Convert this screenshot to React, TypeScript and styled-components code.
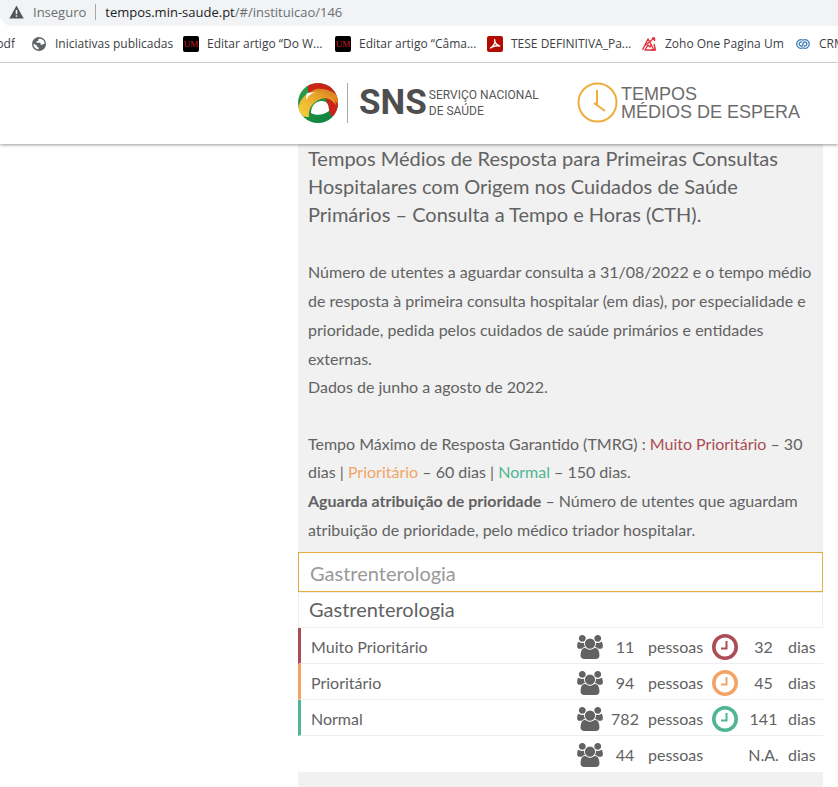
import React from "react";
import styled, { createGlobalStyle } from "styled-components";

const GlobalStyle = createGlobalStyle`
  * { box-sizing: border-box; }
  body { margin: 0; background: #fff; color: #626262; font-family: Lato, sans-serif; }
  a { color: inherit; text-decoration: none; }
  svg { flex: none; }
`;

const colors = { red: "#ac4d55", orange: "#f2a468", green: "#4fb594", text: "#626262" };

const Page = styled.div`
  display: flex;
  flex-direction: column;
  min-height: 100vh;
  overflow: hidden;
`;

const AddressBar = styled.div`
  display: flex;
  align-items: center;
  height: 26px;
  padding: 0 0 2px 9px;
  background: #f1f3f4;
  border-bottom-left-radius: 12px;
  font: 13px/20px "Open Sans", sans-serif;
  color: #6b6f73;
`;

const Security = styled.button`
  display: flex;
  align-items: center;
  gap: 9px;
  padding: 0 9px 0 0;
  border: 0;
  border-right: 1px solid #a5a8ab;
  height: 16px;
  background: none;
  font: 13px/16px "Open Sans", sans-serif;
  color: inherit;
`;

const Url = styled.div`
  margin-left: 9px;
  b { font-weight: 400; color: #202124; }
`;

const Bookmarks = styled.nav`
  display: grid;
  grid-template-columns: 31px 152px 152px 152px 154px 154px 60px;
  align-items: center;
  height: 37px;
  border-bottom: 1px solid #d9dadb;
  overflow: hidden;
  font: 12px/16px "Open Sans", sans-serif;
  color: #3c4043;
`;

const Bookmark = styled.a`
  display: flex;
  align-items: center;
  gap: 8px;
  white-space: nowrap;
`;

const ClippedBookmark = styled(Bookmark)`
  width: 15px;
  justify-content: flex-end;
  overflow: hidden;
`;

const Header = styled.header`
  position: relative;
  display: flex;
  align-items: center;
  height: 81px;
  padding: 0 15px 2px 298px;
  background: #fff;
  box-shadow: 0 1px 3px rgba(0, 0, 0, 0.4);
`;

const Brand = styled.a`
  display: flex;
  align-items: center;
  width: 279px;
`;

const Divider = styled.span`
  width: 1px;
  height: 40px;
  margin: 0 11px 0 9px;
  background: #aaa;
`;

const Acronym = styled.span`
  font: bold 35px/40px Roboto, sans-serif;
  color: #4e4e4e;
`;

const BrandName = styled.span`
  margin-left: 2px;
  font: 12px/16px Roboto, sans-serif;
  color: #575757;
  white-space: nowrap;
`;

const SiteName = styled.a`
  display: flex;
  align-items: center;
  gap: 3px;
  font: 18px/18px "Liberation Sans", sans-serif;
  color: #6c6c6c;
  white-space: nowrap;
`;

const Main = styled.main`
  display: flex;
  flex: 1;
  flex-direction: column;
  margin: 0 15px 0 298px;
  background: #f1f1f1;
`;

const Intro = styled.section`
  padding: 0 0 8px 10px;
  white-space: nowrap;
`;

const Title = styled.h1`
  margin: 0 0 29px;
  font-size: 20px;
  line-height: 28px;
  font-weight: 400;
`;

const Text = styled.p<{ $line?: number; $gap?: number }>`
  margin: 0 0 ${(p) => p.$gap ?? 0}px;
  font-size: 16px;
  line-height: ${(p) => p.$line ?? 28}px;
`;

const Tone = styled.span<{ $color: string }>`
  color: ${(p) => p.$color};
`;

const Search = styled.input`
  width: 100%;
  height: 40px;
  padding: 2px 11px 0;
  border: 1px solid #e5ac42;
  border-radius: 0;
  outline: 0;
  background: #fff;
  font: 20px/28px Lato, sans-serif;
  color: #626262;
  &::placeholder { color: #999; opacity: 1; }
`;

const Specialty = styled.h2`
  height: 36px;
  margin: 0;
  padding: 0 10px;
  border: 1px solid #eee;
  background: #fff;
  font-size: 20px;
  line-height: 32px;
  font-weight: 400;
`;

const Waiting = styled.table`
  width: 100%;
  table-layout: fixed;
  border-collapse: separate;
  border-spacing: 0;
  background: #fff;
  font-size: 16px;
  line-height: 20px;
`;

const Row = styled.tr<{ $color: string }>`
  height: 36px;
  td, th { padding: 3px 0 0; border-bottom: 1px solid #eee; }
  th {
    padding-left: 10px;
    border-left: 3px solid ${(p) => p.$color};
    text-align: left;
    font-weight: 400;
  }
  &:last-child td, &:last-child th { border-bottom-color: #fff; }
`;

const IconCell = styled.td`
  text-align: center;
  svg { display: block; margin: 0 auto 1px; }
`;

const Amount = styled.td`
  text-align: center;
  white-space: nowrap;
`;

const Unit = styled.td`
  && { padding-left: 5px; }
`;

const Globe = () => (
  <svg width="16" height="16" viewBox="0 0 16 16">
    <circle cx="8" cy="8" r="7" fill="#5f6368" />
    <path d="M8.800 2.400 7.300 3.600v1.400H5.600v1.800h4v2h1.600l1-.9 1.400.2A5.700 5.700 0 0 0 8.800 2.400ZM2.400 7.400 6.100 9.800v1.500h1.500v2.300A5.700 5.700 0 0 1 2.400 7.400Z" fill="#fff" />
  </svg>
);

const Um = () => (
  <svg width="16" height="16" viewBox="0 0 16 16">
    <rect width="16" height="16" rx="2" />
    <text x="8" y="11" textAnchor="middle" fontFamily="Liberation Serif, serif" fontSize="9" fill="#d31920">UM</text>
  </svg>
);

const Pdf = () => (
  <svg width="16" height="16" viewBox="0 0 16 16">
    <rect width="16" height="16" rx="2" fill="#b30b00" />
    <path d="M7.700 3.600C8.300 6 7.200 9.400 3.500 12M7.700 3.600C7.600 6.500 9.500 9 12.700 10M4 11.800C6 10.200 9 9.300 12.700 10" fill="none" stroke="#fff" strokeWidth="1.300" strokeLinecap="round" />
  </svg>
);

const Zoho = () => (
  <svg width="16" height="16" viewBox="0 0 16 16" fill="none" stroke="#df3440" strokeWidth="1.400" strokeLinejoin="round">
    <path d="M1.500 14 7 3l2.500 4.500L13 14H4l3-5 2 2 1.500-3" />
    <path d="M4 9.500 8.500 6 13 2M11 2h2.500v3M13 8l1.500 6H10" />
  </svg>
);

const Crm = () => (
  <svg width="16" height="16" viewBox="0 0 16 16" fill="none" stroke="#3b7eb8" strokeWidth="1.300">
    <path d="M8 4.200A4.300 4.300 0 1 0 8 11.800M8 4.200a4.300 4.300 0 1 1 0 7.600" />
    <path d="M7.300 6.300a2 2 0 1 0 .1 3.300L8.600 6.400a2 2 0 1 1 .2 3.200" />
  </svg>
);

const Warning = () => (
  <svg width="15" height="14" viewBox="0 0 15 14">
    <path d="M7.500 .5 14.700 13.500H.3Z" fill="#53575b" />
    <path d="M7.500 5v4M7.500 10.300v1.500" stroke="#f1f3f4" strokeWidth="1.500" />
  </svg>
);

const Emblem = () => (
  <svg width="40" height="40" viewBox="0 0 40 40">
    <defs>
      <linearGradient id="gold" x1="0" y1="1" x2="1" y2="0">
        <stop offset="0" stopColor="#f7d23a" />
        <stop offset=".5" stopColor="#ecb22e" />
        <stop offset="1" stopColor="#d9801f" />
      </linearGradient>
      <linearGradient id="leaf" x1="0" y1="0" x2="1" y2="1">
        <stop offset="0" stopColor="#2fa04c" />
        <stop offset="1" stopColor="#0a7f3c" />
      </linearGradient>
      <clipPath id="disc"><circle cx="20" cy="20" r="20" /></clipPath>
    </defs>
    <g clipPath="url(#disc)">
      <rect width="40" height="40" fill="url(#leaf)" />
      <path d="M10 0H40V33H33L28 16 10 9Z" fill="#cb2319" />
      <path d="M9 10C16 6 30 7 40 21V14C36 8 26 5 18 6Z" fill="#dd8a24" />
      <path d="M0 30C0 16 9 8 19 8 30 8 38 15 38 22 34 17 29 14 23 16 14 19 10 26 11 34 6 34 2 33 0 30Z" fill="url(#gold)" />
      <path d="M9 10 18 9C14 10 11 12 8 17 8 14 8 12 9 10Z" fill="#fff" />
      <path d="M13 30C13 23 17 18 24 18 29 18 31 22 31 28 26 32 18 33 13 30Z" fill="#fff" />
    </g>
  </svg>
);

const SiteClock = () => (
  <svg width="41" height="41" viewBox="0 0 41 41" fill="none" stroke="#f0ad3d" strokeWidth="2">
    <circle cx="20.500" cy="20.500" r="19" />
    <path d="M20 8v16M17 21l11 8" />
  </svg>
);

const People = () => (
  <svg width="26" height="24" viewBox="0 0 1920 1792" fill={colors.text}>
    <path d="M593 896q-162 5-265 128h-134q-82 0-138-40.500t-56-118.500q0-353 124-353 6 0 43.500 21t97.500 42.500 119 21.500q67 0 133-23-5 37-5 66 0 139 81 256zM1664 1533q0 120-73 189.500t-194 69.500h-874q-121 0-194-69.500t-73-189.500q0-53 3.500-103.500t14-109 26.500-108.500 43-97.500 62-81 85.500-53.500 111.500-20q10 0 43 21.500t73 48 107 48 135 21.500 135-21.500 107-48 73-48 43-21.500q61 0 111.500 20t85.500 53.500 62 81 43 97.500 26.500 108.500 14 109 3.500 103.500zM640 256q0 106-75 181t-181 75-181-75-75-181 75-181 181-75 181 75 75 181zM1344 640q0 159-112.500 271.500t-271.500 112.500-271.500-112.500-112.500-271.500 112.500-271.500 271.500-112.500 271.500 112.500 112.500 271.500zM1920 865q0 78-56 118.500t-138 40.500h-134q-103-123-265-128 81-117 81-256 0-29-5-66 66 23 133 23 59 0 119-21.500t97.500-42.500 43.500-21q124 0 124 353zM1792 256q0 106-75 181t-181 75-181-75-75-181 75-181 181-75 181 75 75 181z" />
  </svg>
);

const Clock = ({ color }: { color: string }) => (
  <svg width="26" height="26" viewBox="0 0 26 26" fill="none" stroke={color}>
    <circle cx="13" cy="13" r="11.200" strokeWidth="3.600" />
    <path d="M14.500 7v7.500H9" strokeWidth="2" />
  </svg>
);

const bookmarks = [
  { label: "Iniciativas publicadas", Icon: Globe },
  { label: "Editar artigo “Do W...", Icon: Um },
  { label: "Editar artigo “Câma...", Icon: Um },
  { label: "TESE DEFINITIVA_Pa...", Icon: Pdf },
  { label: "Zoho One Pagina Um", Icon: Zoho },
  { label: "CRM", Icon: Crm },
];

const rows = [
  { label: "Muito Prioritário", people: "11", days: "32", color: colors.red },
  { label: "Prioritário", people: "94", days: "45", color: colors.orange },
  { label: "Normal", people: "782", days: "141", color: colors.green },
  { label: "", people: "44", days: "N.A.", color: "" },
];

export default function App() {
  return (
    <Page>
      <GlobalStyle />
      <AddressBar>
        <Security><Warning />Inseguro</Security>
        <Url><b>tempos.min-saude.pt</b>/#/instituicao/146</Url>
      </AddressBar>
      <Bookmarks>
        <ClippedBookmark href="#">pdf</ClippedBookmark>
        {bookmarks.map(({ label, Icon }) => (
          <Bookmark href="#" key={label}><Icon />{label}</Bookmark>
        ))}
      </Bookmarks>
      <Header>
        <Brand href="#">
          <Emblem />
          <Divider />
          <Acronym>SNS</Acronym>
          <BrandName>SERVIÇO NACIONAL<br />DE SAÚDE</BrandName>
        </Brand>
        <SiteName href="#">
          <SiteClock />
          <span>TEMPOS<br />MÉDIOS DE ESPERA</span>
        </SiteName>
      </Header>
      <Main>
        <Intro>
          <Title>
            Tempos Médios de Resposta para Primeiras Consultas<br />
            Hospitalares com Origem nos Cuidados de Saúde<br />
            Primários – Consulta a Tempo e Horas (CTH).
          </Title>
          <Text $line={29}>
            Número de utentes a aguardar consulta a 31/08/2022 e o tempo médio<br />
            de resposta à primeira consulta hospitalar (em dias), por especialidade e<br />
            prioridade, pedida pelos cuidados de saúde primários e entidades<br />
            externas.
          </Text>
          <Text $gap={29}>Dados de junho a agosto de 2022.</Text>
          <Text>
            Tempo Máximo de Resposta Garantido (TMRG) : <Tone $color={colors.red}>Muito Prioritário</Tone> – 30<br />
            dias | <Tone $color={colors.orange}>Prioritário</Tone> – 60 dias | <Tone $color={colors.green}>Normal</Tone> – 150 dias.
          </Text>
          <Text $line={29}>
            <b>Aguarda atribuição de prioridade</b> – Número de utentes que aguardam<br />
            atribuição de prioridade, pelo médico triador hospitalar.
          </Text>
        </Intro>
        <Search aria-label="Especialidade" placeholder="Gastrenterologia" />
        <Specialty>Gastrenterologia</Specialty>
        <Waiting>
          <colgroup>
            <col />
            <col width="35" />
            <col width="36" />
            <col width="62" />
            <col width="39" />
            <col width="39" />
            <col width="40" />
          </colgroup>
          <tbody>
            {rows.map((r) => (
              <Row key={r.people} $color={r.color || "#fff"}>
                <th scope="row">{r.label}</th>
                <IconCell><People /></IconCell>
                <Amount>{r.people}</Amount>
                <Unit>pessoas</Unit>
                <IconCell>{r.color && <Clock color={r.color} />}</IconCell>
                <Amount>{r.days}</Amount>
                <Unit>dias</Unit>
              </Row>
            ))}
          </tbody>
        </Waiting>
      </Main>
    </Page>
  );
}
